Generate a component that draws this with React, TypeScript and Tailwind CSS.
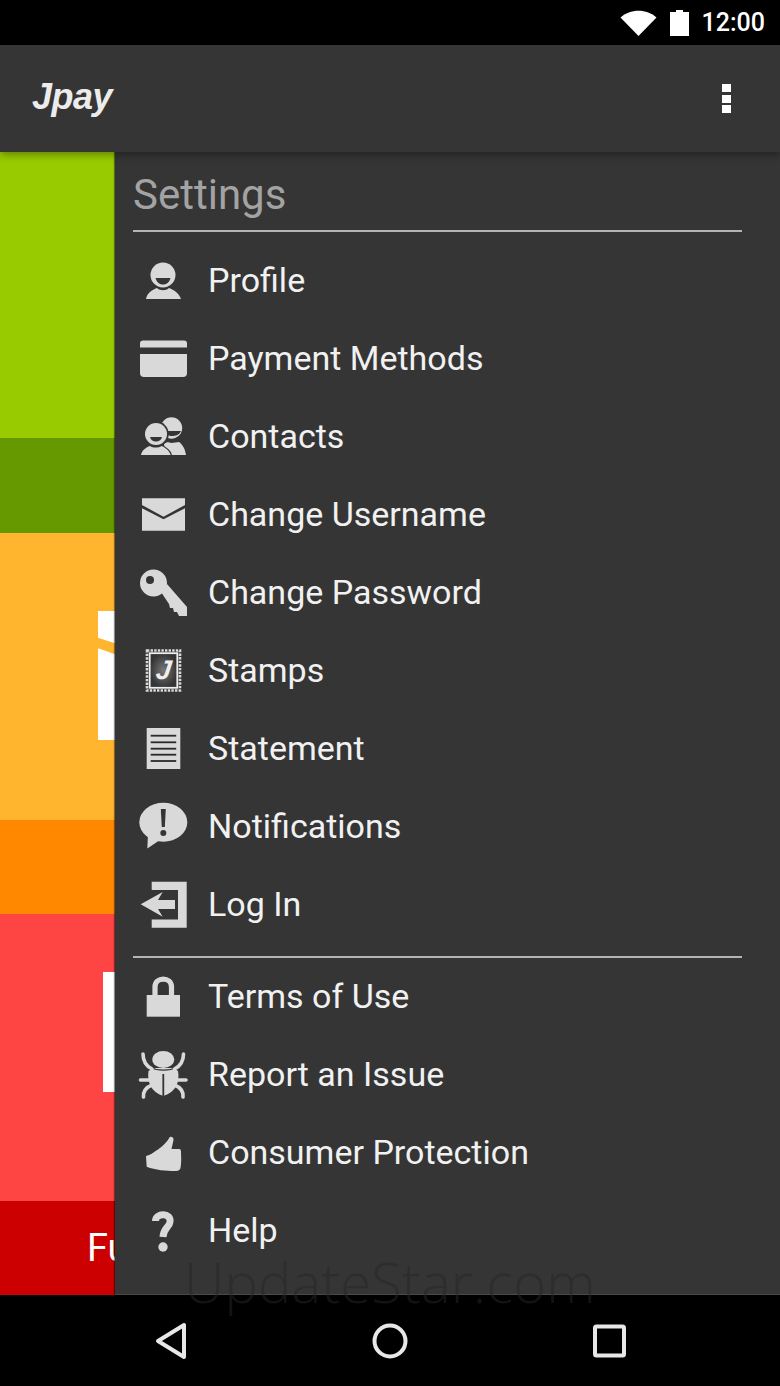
import React from "react";

const C = "#d9d9d9";
const D = "#353535";

const icons: Record<string, React.ReactNode> = {
  profile: (
    <>
      <circle cx="30" cy="25" r="12.5" fill={C} />
      <path d="M22.5 28 H37.5 C36 33 33 34.5 30 34.5 C27 34.5 24 33 22.5 28Z" fill={D} />
      <path d="M13 49 C14 43 19 40 24 38 C27 41 33 41 36 38 C41 40 46 43 48 49Z" fill={C} />
    </>
  ),
  card: (
    <>
      <path d="M7 19.5 V15.5 Q7 12.5 10 12.5 H51 Q54 12.5 54 15.5 V19.5Z" fill={C} />
      <path d="M7 26 H54 V45 Q54 49 50 49 H11 Q7 49 7 45Z" fill={C} />
    </>
  ),
  contacts: (
    <>
      <circle cx="38.5" cy="22" r="10.7" fill={C} />
      <path d="M32 25 H48 C46 29.5 42 30 39 30 C36 30 33.5 29 32 25Z" fill={D} />
      <path d="M34 49 C34 44 31 41 31 38 C33 36 36 35.5 38 37 C41 37 44 36 46 36 C49 38 52 42 53 49Z" fill={C} />
      <circle cx="23" cy="28" r="12.7" fill={D} />
      <circle cx="23" cy="28" r="11" fill={C} />
      <path d="M17 31 H29 C28 34.5 25.5 35.5 23 35.5 C20.5 35.5 18 34.5 17 31Z" fill={D} />
      <path d="M7.5 49 C8.5 44 13 41.5 17 40 C20 42 25.5 42 28.5 40 C32 41.5 36.5 44 38 49Z" fill={D} stroke={D} strokeWidth="2" />
      <path d="M8 49 C9 44 13 41.5 17 40 C20 42 25.5 42 28.5 40 C32 41.5 36 44 37.7 49Z" fill={C} />
    </>
  ),
  mail: (
    <>
      <path d="M9 14.3 H52 V21 L30.5 32.7 L9 21Z" fill={C} />
      <path d="M9 24.3 L30.5 35.3 L52 24.3 V46.7 H9Z" fill={C} />
    </>
  ),
  key: (
    <>
      <path d="M28 30 L34 22 L54 45 V54 H46 L44 50 L41 50 L40 46 L37 46 L36 42Z" fill={C} />
      <circle cx="20.5" cy="21" r="13.5" fill={C} />
      <circle cx="17" cy="18" r="4" fill={D} />
    </>
  ),
  stamp: (
    <>
      <defs>
        <radialGradient id="st">
          <stop offset="0" stopColor="#777777" />
          <stop offset="1" stopColor="#343434" />
        </radialGradient>
      </defs>
      <rect x="14" y="10.5" width="33" height="40" fill="none" stroke={C} strokeWidth="2.6" strokeDasharray="2.4 1.2" />
      <rect x="16.7" y="13.2" width="27.6" height="34.6" fill="url(#st)" stroke="#eeeeee" strokeWidth="1.8" />
      <text x="30" y="39" textAnchor="middle" fontSize="27" fontStyle="italic" fontWeight="700" fontFamily="'Liberation Sans', sans-serif" fill="#eeeeee" transform="skewX(-8) translate(5 0)">J</text>
    </>
  ),
  statement: (
    <>
      <rect x="13.7" y="10" width="33.6" height="41" fill={C} />
      {[17.7, 24.3, 30.7, 36.7, 43].map((y) => (
        <rect key={y} x="17.7" y={y - 0.9} width="25.5" height="1.8" fill="#2a2a2a" />
      ))}
    </>
  ),
  bell: (
    <>
      <ellipse cx="30.3" cy="26.3" rx="24" ry="19.5" fill={C} />
      <path d="M15 38 L14.3 52.5 L27 44Z" fill={C} />
      <path d="M27.8 13 H32.8 L31.8 31 H28.8Z" fill={D} />
      <circle cx="30.3" cy="37" r="3" fill={D} />
    </>
  ),
  login: (
    <>
      <path d="M18.7 7.7 H53.7 V53.7 H18.7 V45.5 H45 V16 H18.7Z" fill={C} />
      <path d="M7.7 30.3 L29.7 18 L25 26 H42 V35 H25 L29.7 42.7Z" fill={C} />
    </>
  ),
  lock: (
    <>
      <path d="M22 30 V21 C22 10.5 38.5 10.5 38.5 21 V30" fill="none" stroke={C} strokeWidth="5.2" />
      <rect x="13.7" y="29" width="33.3" height="21.7" fill={C} />
    </>
  ),
  bug: (
    <>
      <ellipse cx="30.3" cy="15.5" rx="11" ry="8.5" fill={C} />
      <path d="M15.5 27 C20 23 25 24 30.3 24 C36 24 41 23 45 27 C47 38 43 48 30.3 52 C18 48 14 38 15.5 27Z" fill={C} />
      <path d="M18 23.5 C24 27 37 27 43 23.5" fill="none" stroke={D} strokeWidth="1.4" />
      <rect x="29.4" y="30" width="1.8" height="22" fill={D} />
      <g fill="none" stroke={C} strokeWidth="3.6" strokeLinecap="round">
        <path d="M10 10 C10 17 13 22 19 25" />
        <path d="M50.5 10 C50.5 17 47.5 22 41.5 25" />
        <path d="M7.5 36 H18" />
        <path d="M53 36 H42" />
        <path d="M10.5 53 C10 47 14 43 19 41" />
        <path d="M50 53 C50.5 47 46.5 43 41.5 41" />
      </g>
    </>
  ),
  thumb: (
    <path d="M37 14.7 C39 14.5 40.8 15.5 40.5 18 L38.5 27 H46 C48 27 48.2 29 48 31 C48.3 36 48.3 42 47.5 46 C46.5 49 44 49 41 49 C34 49 22 48 13.7 44.7 L13 34 C18 33 22 29 25 27.5 C30 24 34 20 37 14.7Z" fill={C} />
  ),
  help: (
    <>
      <path d="M22.5 21 C22.5 12.5 38.5 12.5 37 22 C36.5 27 30.5 28 30 37" fill="none" stroke={C} strokeWidth="7" />
      <circle cx="30" cy="47" r="4.7" fill={C} />
    </>
  ),
};

function Row({ icon, label }: { icon: string; label: string }) {
  return (
    <div className="flex h-[78px] items-center gap-[15px]">
      <svg className="h-[60px] w-[60px] shrink-0" viewBox="0 0 60 60">
        {icons[icon]}
      </svg>
      <span className="pb-[1px] text-[34px] leading-none text-[#f1f1f1]">{label}</span>
    </div>
  );
}

export default function App() {
  return (
    <div
      className="relative flex h-[1386px] w-[780px] flex-col overflow-hidden bg-black"
      style={{ fontFamily: "Roboto, 'Liberation Sans', sans-serif" }}
    >
      {/* status bar */}
      <div className="flex h-[45px] shrink-0 items-center justify-end pr-[15px]">
        <svg className="mr-[13px] h-[26px] w-[37px]" viewBox="0 0 37 26">
          <path d="M0.5 7.5 C10 -1.5 27 -1.5 36.5 7.5 L18.5 26Z" fill="#ffffff" />
        </svg>
        <svg className="mr-[13px] h-[26px] w-[19px]" viewBox="0 0 19 26">
          <path d="M6 0 H13 V2 H19 V26 H0 V2 H6Z" fill="#ffffff" />
        </svg>
        <span className="text-[25px] font-medium leading-none text-white">12:00</span>
      </div>

      {/* app bar */}
      <div className="relative z-10 flex h-[107px] shrink-0 items-center justify-between bg-[#353535] pl-[32px] pr-[49px] shadow-[0_3px_8px_rgba(0,0,0,0.35)]">
        <span
          className="-mt-[4px] text-[36px] font-bold italic leading-none tracking-[-0.5px] text-[#ececec]"
          style={{ fontFamily: "'Liberation Sans', sans-serif" }}
        >
          Jpay
        </span>
        <div className="flex flex-col gap-[2.5px]">
          <span className="h-[8px] w-[9px] bg-white" />
          <span className="h-[8px] w-[9px] bg-white" />
          <span className="h-[8px] w-[9px] bg-white" />
        </div>
      </div>

      {/* content */}
      <div className="flex min-h-0 flex-1">
        <div className="flex w-[115px] shrink-0 flex-col overflow-hidden">
          <div className="h-[286px] bg-[#99cc00]" />
          <div className="h-[95px] bg-[#669900]" />
          <div className="flex h-[287px] justify-end bg-[#ffb52e] pt-[78px]">
            <svg className="h-[129px] w-[17px]" viewBox="0 0 17 129">
              <rect width="17" height="129" fill="#ffffff" />
              <path d="M0 26.7 L17 32.3 V43.3 L0 37.3Z" fill="#ffb52e" />
            </svg>
          </div>
          <div className="h-[94px] bg-[#ff8800]" />
          <div className="flex h-[287px] justify-end bg-[#ff4444] pt-[58px]">
            <div className="h-[120px] w-[12px] bg-white" />
          </div>
          <div className="flex h-[94px] items-center overflow-hidden bg-[#cc0000] pl-[87px]">
            <span className="text-[38px] leading-none text-white">Fu</span>
          </div>
        </div>

        <div className="min-w-0 flex-1 border-b border-[#4a4a4a] bg-[#353535] pl-[18px] pr-[38px] shadow-[-1px_0_1px_rgba(0,0,0,0.45)]">
          <div className="flex h-[78px] items-end pb-[14px]">
            <span className="text-[42px] leading-none text-[#a3a3a3]">Settings</span>
          </div>
          <div className="h-[2px] bg-[#b4b4b4]" />
          <div className="mt-[9px]">
            <Row icon="profile" label="Profile" />
            <Row icon="card" label="Payment Methods" />
            <Row icon="contacts" label="Contacts" />
            <Row icon="mail" label="Change Username" />
            <Row icon="key" label="Change Password" />
            <Row icon="stamp" label="Stamps" />
            <Row icon="statement" label="Statement" />
            <Row icon="bell" label="Notifications" />
            <Row icon="login" label="Log In" />
          </div>
          <div className="mt-[13px] h-[2px] bg-[#b4b4b4]" />
          <div className="-mt-[1px]">
            <Row icon="lock" label="Terms of Use" />
            <Row icon="bug" label="Report an Issue" />
            <Row icon="thumb" label="Consumer Protection" />
            <Row icon="help" label="Help" />
          </div>
        </div>
      </div>

      {/* nav bar */}
      <div className="flex h-[91px] shrink-0 items-start pl-[154px] pt-[26px]">
        <svg className="h-[40px] w-[36px]" viewBox="0 0 36 40">
          <path d="M30 4 V36 L4 20Z" fill="none" stroke="#e8e8e8" strokeWidth="4" strokeLinejoin="round" />
        </svg>
        <svg className="ml-[180px] h-[40px] w-[40px]" viewBox="0 0 40 40">
          <circle cx="20" cy="20" r="15.5" fill="none" stroke="#e8e8e8" strokeWidth="4" />
        </svg>
        <svg className="ml-[179px] h-[40px] w-[40px]" viewBox="0 0 40 40">
          <rect x="6" y="5.5" width="29" height="29" rx="1.5" fill="none" stroke="#e8e8e8" strokeWidth="4" />
        </svg>
      </div>

      {/* watermark */}
      <span
        className="absolute left-[184px] top-[1247px] text-[56px] leading-[68px] tracking-[0.2px] text-[#262626] opacity-50"
        style={{ fontFamily: "'Open Sans', sans-serif", fontWeight: 300 }}
      >
        UpdateStar.com
      </span>
    </div>
  );
}
